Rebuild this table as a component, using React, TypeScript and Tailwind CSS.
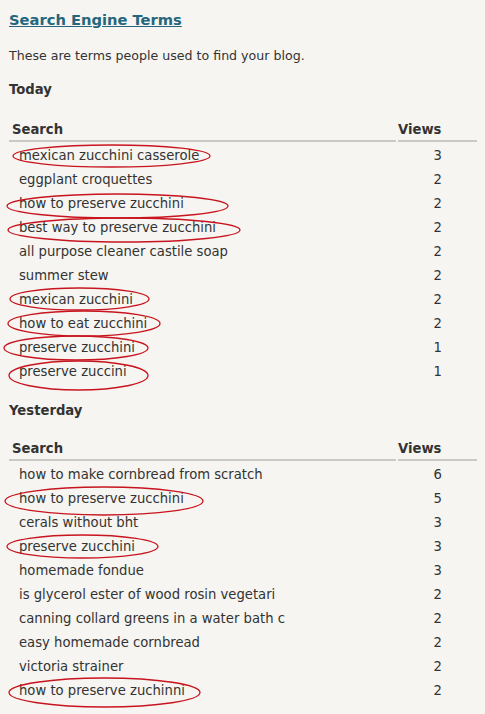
import React from "react";

type Ellipse = { cx: number; cy: number; rx: number; ry: number };

interface Term {
  term: string;
  views: number;
  circle?: Ellipse;
}

const today: Term[] = [
  { term: "mexican zucchini casserole", views: 3, circle: { cx: 102.5, cy: 12, rx: 98.5, ry: 11 } },
  { term: "eggplant croquettes", views: 2 },
  { term: "how to preserve zucchini", views: 2, circle: { cx: 108.5, cy: 14, rx: 110.5, ry: 12 } },
  { term: "best way to preserve zucchini", views: 2, circle: { cx: 115, cy: 14, rx: 116, ry: 12 } },
  { term: "all purpose cleaner castile soap", views: 2 },
  { term: "summer stew", views: 2 },
  { term: "mexican zucchini", views: 2, circle: { cx: 70.5, cy: 11, rx: 69.5, ry: 11 } },
  { term: "how to eat zucchini", views: 2, circle: { cx: 75, cy: 11.5, rx: 76, ry: 12.5 } },
  { term: "preserve zucchini", views: 1, circle: { cx: 67, cy: 12, rx: 72, ry: 12 } },
  { term: "preserve zuccini", views: 1, circle: { cx: 69.5, cy: 15.5, rx: 69.5, ry: 14.5 } },
];

const yesterday: Term[] = [
  { term: "how to make cornbread from scratch", views: 6 },
  { term: "how to preserve zucchini", views: 5, circle: { cx: 95, cy: 14, rx: 99, ry: 14 } },
  { term: "cerals without bht", views: 3 },
  { term: "preserve zucchini", views: 3, circle: { cx: 73.5, cy: 11.5, rx: 75.5, ry: 11.5 } },
  { term: "homemade fondue", views: 3 },
  { term: "is glycerol ester of wood rosin vegetari", views: 2 },
  { term: "canning collard greens in a water bath c", views: 2 },
  { term: "easy homemade cornbread", views: 2 },
  { term: "victoria strainer", views: 2 },
  { term: "how to preserve zuchinni", views: 2, circle: { cx: 95.5, cy: 13.5, rx: 95.5, ry: 14.5 } },
];

const TermTable: React.FC<{ rows: Term[] }> = ({ rows }) => (
  <div className="w-[468px]">
    <div className="flex gap-[2px] font-bold text-[#333]">
      <div className="flex-1 h-[23px] pl-[3px] pt-[4px] border-b-2 border-[#c9c9c6]">Search</div>
      <div className="w-[79px] h-[23px] pt-[4px] border-b-2 border-[#c9c9c6]">Views</div>
    </div>
    <div className="mt-[2px]">
      {rows.map((r) => (
        <div key={r.term} className="relative flex h-[24px] items-center text-[#333]">
          <div className="flex-1 pl-[10px] whitespace-nowrap">{r.term}</div>
          <div className="w-[79px] flex">
            <span className="w-[44px] text-right">{r.views}</span>
          </div>
          {r.circle && (
            <svg
              className="absolute left-0 top-0 overflow-visible pointer-events-none"
              width="260"
              height="24"
            >
              <ellipse
                cx={r.circle.cx}
                cy={r.circle.cy}
                rx={r.circle.rx}
                ry={r.circle.ry}
                fill="none"
                stroke="#c8141e"
                strokeWidth="1.3"
              />
            </svg>
          )}
        </div>
      ))}
    </div>
  </div>
);

export default function App() {
  return (
    <div
      className="w-[485px] h-[714px] overflow-hidden bg-[#f6f5f1] px-[9px] text-[13.2px] leading-none"
      style={{ fontFamily: '"DejaVu Sans", Verdana, sans-serif' }}
    >
      <div className="h-[33px] pt-[13px]">
        <a className="text-[14.7px] font-bold text-[#25667c] underline">Search Engine Terms</a>
      </div>
      <p className="mt-[17px] text-[12.6px] text-[#333]">These are terms people used to find your blog.</p>
      <h3 className="mt-[20px] font-bold text-[#333]">Today</h3>
      <div className="mt-[23px]">
        <TermTable rows={today} />
      </div>
      <h3 className="mt-[20px] font-bold text-[#333]">Yesterday</h3>
      <div className="mt-[21px]">
        <TermTable rows={yesterday} />
      </div>
    </div>
  );
}
